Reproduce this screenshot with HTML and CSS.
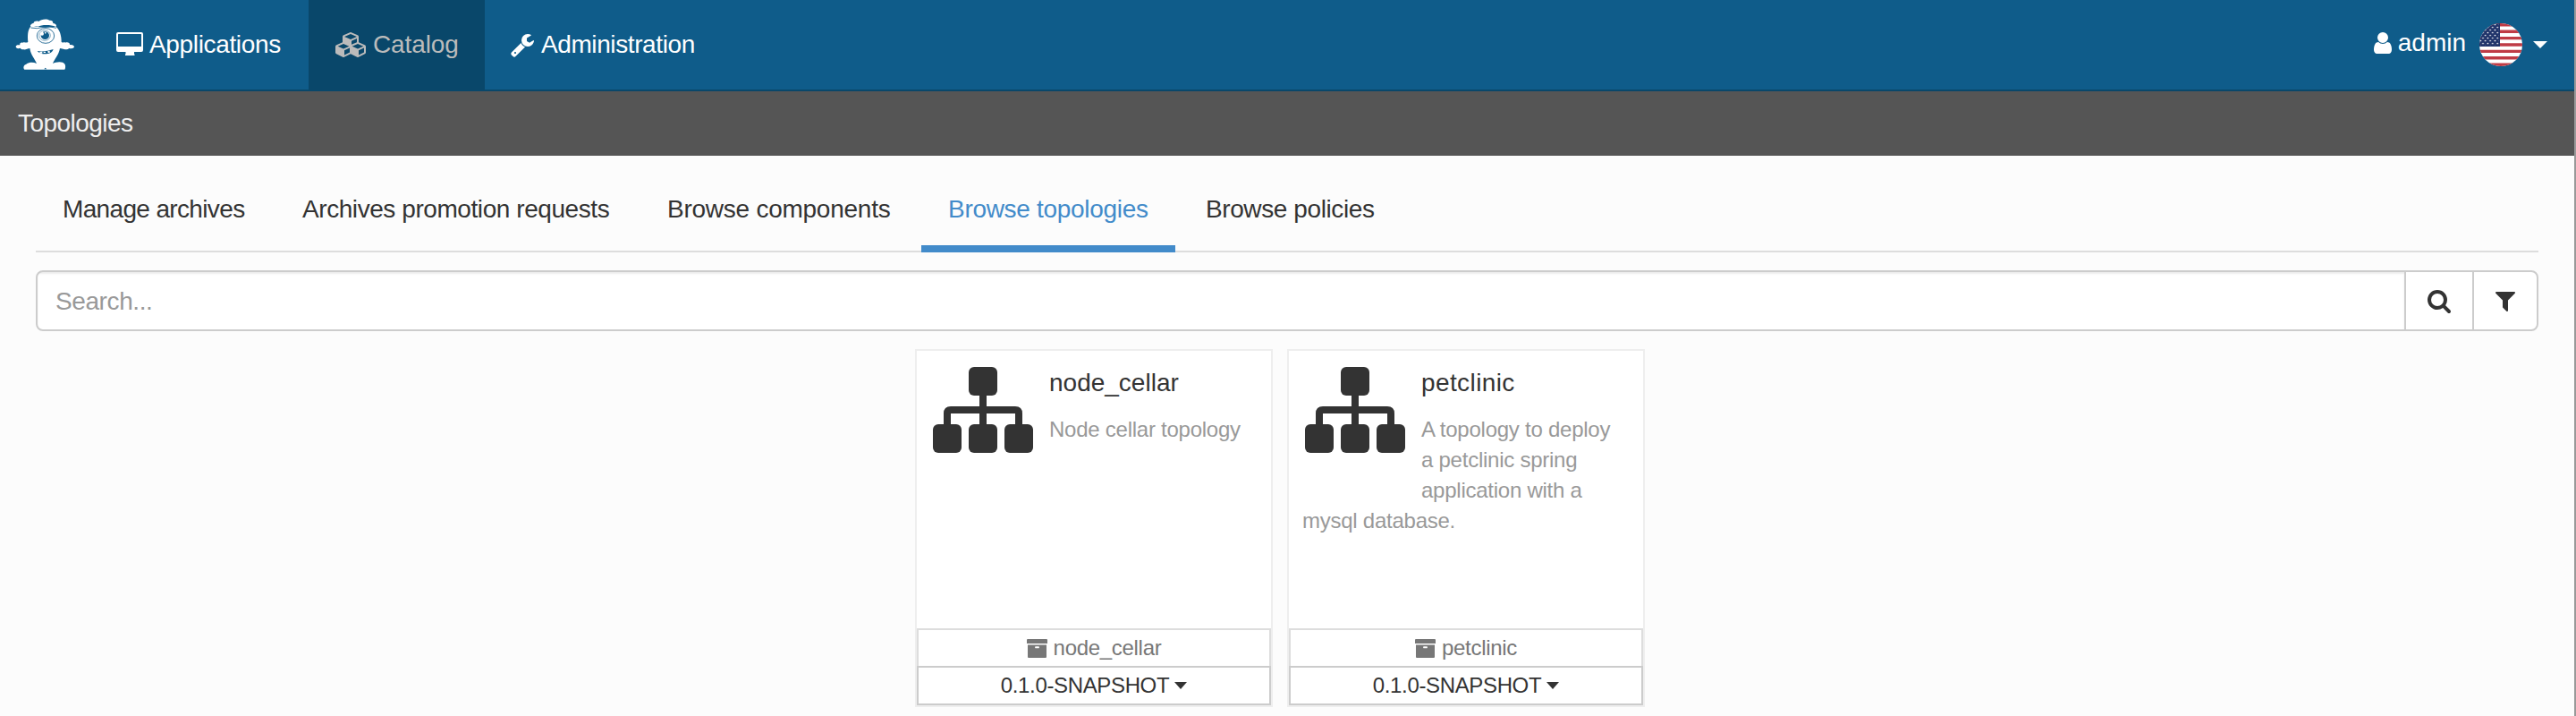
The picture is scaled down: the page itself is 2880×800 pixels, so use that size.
FILE: index.html
```html
<!DOCTYPE html>
<html lang="en">
<head>
<meta charset="utf-8">
<title>Topologies</title>
<link rel="stylesheet" href="styles.css">
</head>
<body>
<div class="page">
  <header class="navbar">
    <a class="brand">
      <svg class="logo" viewBox="0 0 198 174">
        <g fill="#fff">
          <path d="M51 27 Q60 24 100 29 L137 27 C149 37 155 55 155 78 C163 82 165 77 168 80 C176 77 184 81 183 87 C192 86 198 89 198 94 C197 99 190 101 181 99 C177 103 170 104 164 102 C160 101 157 100 150 99 C146 122 131 136 126 150 C136 145 160 141 167 153 C169 158 169 166 166 170 L31 170 C26 164 28 155 37 152 C47 145 61 145 72 150 C67 136 52 122 49 99 C42 100 35 104 28 103 C20 103 18 99 17 98 C10 101 2 99 2 93 C3 87 9 87 16 88 C14 82 19 78 26 80 C31 76 35 82 43 78 C41 56 42 38 51 27 Z"/>
          <path d="M52 26 C48 22 54 16 62 14 C62 8 72 6 79 9 C86 1 107 -1 115 5 C125 4 129 12 126 15 C138 16 140 23 136 27 C120 19 87 20 77 26 C68 23 62 30 52 26 Z"/>
        </g>
        <path d="M52 30 Q72 35 96 28 Q116 24 138 31" fill="none" stroke="#0f5c8a" stroke-width="2.500"/>
        <ellipse cx="102" cy="57" rx="29" ry="25" fill="#fff" stroke="#0f5c8a" stroke-width="2.500"/>
        <ellipse cx="99" cy="56" rx="19" ry="17" fill="none" stroke="#0f5c8a" stroke-width="1.500"/>
        <ellipse cx="100" cy="56" rx="14" ry="13" fill="#0f5c8a"/>
        <circle cx="90" cy="50" r="6" fill="#fff"/>
        <circle cx="101" cy="47" r="2.500" fill="#fff"/>
        <path d="M74 108 Q101 112 128 102 Q124 117 104 118 Q84 119 74 108 Z" fill="#0f5c8a"/>
        <path d="M82 110 h9 v6 h-9 z M95 110 h7 v4 h-7 z M109 108 l7 -1 v7 h-6 z" fill="#fff"/>
        <path d="M97 169 L101 164 L106 169 Z" fill="#0f5c8a"/>
      </svg>
    </a>
    <nav class="menu">
      <a class="menu-item apps">
        <svg class="icon-desktop" viewBox="0 0 30 26"><path fill="#fff" fill-rule="evenodd" d="M2 0H28Q30 0 30 2V20Q30 22 28 22H20V24.500H20.500V26H10V24.500H10.500V22H2Q0 22 0 20V2Q0 0 2 0ZM2 2.500V15.500Q2 16 2.500 16H27.500Q28 16 28 15.500V2.500Q28 2 27.500 2H2.500Q2 2 2 2.500Z"/></svg>
        <span>Applications</span>
      </a>
      <a class="menu-item catalog active">
        <svg class="icon-cubes" viewBox="0 0 2176 1792"><path fill="#bbb" d="M640 1632l384-192v-314l-384 164v342zm-64-454l404-173-404-173-404 173zm1088 454l384-192v-314l-384 164v342zm-64-454l404-173-404-173-404 173zm-448-293l384-165v-266l-384 164v267zm-64-379l441-189-441-189-441 189zm1088 518v416q0 36-19 67t-52 47l-448 224q-25 14-57 14t-57-14l-448-224q-4-2-7-4-2 2-7 4l-448 224q-25 14-57 14t-57-14l-448-224q-33-16-52-47t-19-67v-416q0-38 21.500-70t56.500-48l434-186v-400q0-38 21.500-70t56.500-48l448-192q23-10 50-10t50 10l448 192q35 16 56.500 48t21.500 70v400l434 186q36 16 57 48t21 70z"/></svg>
        <span>Catalog</span>
      </a>
      <a class="menu-item administration">
        <svg class="icon" viewBox="0 0 1792 1792"><path fill="#fff" d="M448 1472q0-26-19-45t-45-19-45 19-19 45 19 45 45 19 45-19 19-45zm644-420l-682 682q-37 37-90 37-52 0-91-37l-106-108q-38-36-38-90 0-53 38-91l681-681q39 98 114.500 173.500t173.500 114.500zm634-435q0 39-23 106-47 134-164.500 217.500t-258.500 83.500q-185 0-316.500-131.500t-131.500-316.500 131.500-316.500 316.500-131.500q58 0 121.500 16.500t107.500 46.500q16 11 16 28t-16 28l-293 169v224l193 107q5-3 79-48.500t135.500-81 70.500-35.500q15 0 23.500 10t8.500 25z"/></svg>
        <span>Administration</span>
      </a>
    </nav>
    <div class="account">
      <svg class="icon-user" viewBox="256 0 1280 1792"><path fill="#fff" d="M1536 1399q0 109-62.500 187t-150.500 78h-854q-88 0-150.500-78t-62.500-187q0-85 8.500-160.500t31.500-152 58.500-131 94-89 134.500-34.500q131 128 313 128t313-128q76 0 134.500 34.500t94 89 58.500 131 31.500 152 8.500 160.500zm-256-887q0 159-112.500 271.500t-271.500 112.500-271.500-112.500-112.500-271.500 112.500-271.500 271.500-112.500 271.500 112.500 112.500 271.500z"/></svg>
      <span class="user-name">admin</span>
      <svg class="flag" viewBox="0 0 48 48">
        <defs>
          <clipPath id="round"><circle cx="24" cy="24" r="24"/></clipPath>
          <pattern id="stars" width="5.400" height="6" patternUnits="userSpaceOnUse"><circle cx="1.300" cy="1.500" r=".85" fill="#fff"/><circle cx="4" cy="4.500" r=".85" fill="#fff"/></pattern>
        </defs>
        <g clip-path="url(#round)">
          <rect width="48" height="48" fill="#fff"/>
          <path stroke="#bf3b45" stroke-width="3.400" d="M0 1.800H48M0 9.200H48M0 16.600H48M0 24H48M0 31.400H48M0 38.800H48M0 46.200H48"/>
          <rect width="23" height="26" fill="#20346a"/>
          <rect width="22" height="25" fill="url(#stars)"/>
        </g>
      </svg>
      <svg class="caret-nav" viewBox="0 0 16 8"><path fill="#fff" d="M0 0H16L8 8Z"/></svg>
    </div>
  </header>
  <div class="context-bar">Topologies</div>
  <main class="content">
    <nav class="tabs">
      <a class="tab t1">Manage archives</a>
      <a class="tab t2">Archives promotion requests</a>
      <a class="tab t3">Browse components</a>
      <a class="tab t4 selected">Browse topologies</a>
      <a class="tab t5">Browse policies</a>
    </nav>
    <div class="search">
      <div class="search-input">Search...</div>
      <div class="search-button find"><svg class="icon" viewBox="0 0 1792 1792"><path fill="#333" d="M1216 832q0-185-131.500-316.500t-316.500-131.500-316.500 131.500-131.500 316.500 131.500 316.500 316.500 131.500 316.500-131.500 131.500-316.500zm512 832q0 52-38 90t-90 38q-54 0-90-38l-343-342q-179 124-399 124-143 0-273.500-55.500t-225-150-150-225-55.500-273.500 55.500-273.500 150-225 225-150 273.500-55.500 273.500 55.500 225 150 150 225 55.500 273.500q0 220-124 399l343 343q37 37 37 90z"/></svg></div>
      <div class="search-button filter"><svg class="icon" viewBox="0 0 1792 1792"><path fill="#333" d="M1595 295q17 41-14 70l-493 493v742q0 42-39 59-13 5-25 5-27 0-45-19l-256-256q-19-19-19-45v-486l-493-493q-31-29-14-70 17-39 59-39h1280q42 0 59 39z"/></svg></div>
    </div>
    <div class="cards">
      <article class="card">
        <div class="card-body">
          <svg class="sitemap" viewBox="0 0 112 96"><g fill="#333"><rect x="40" width="32" height="32" rx="6"/><rect y="64" width="32" height="32" rx="6"/><rect x="40" y="64" width="32" height="32" rx="6"/><rect x="80" y="64" width="32" height="32" rx="6"/><path d="M52 30H60V44H92Q100 44 100 52V66H92V52H60V66H52V52H20V66H12V52Q12 44 20 44H52Z"/></g></svg>
          <h3 class="title-node">node_cellar</h3>
          <p>Node cellar topology</p>
        </div>
        <div class="archive">
          <svg class="icon-archive" viewBox="0 0 23 21"><path fill="#777" fill-rule="evenodd" d="M1 0H22Q23 0 23 1V5H0V1Q0 0 1 0ZM1 6.500H22V20Q22 21 21 21H2Q1 21 1 20ZM9.500 8.300Q8.500 9.300 9.500 10.300H13.500Q14.500 9.300 13.500 8.300Z"/></svg>
          <span>node_cellar</span>
        </div>
        <div class="version"><span>0.1.0-SNAPSHOT</span><svg class="caret" viewBox="0 0 14 8"><path fill="#333" d="M0 0H14L7 8Z"/></svg></div>
      </article>
      <article class="card">
        <div class="card-body">
          <svg class="sitemap" viewBox="0 0 112 96"><g fill="#333"><rect x="40" width="32" height="32" rx="6"/><rect y="64" width="32" height="32" rx="6"/><rect x="40" y="64" width="32" height="32" rx="6"/><rect x="80" y="64" width="32" height="32" rx="6"/><path d="M52 30H60V44H92Q100 44 100 52V66H92V52H60V66H52V52H20V66H12V52Q12 44 20 44H52Z"/></g></svg>
          <h3 class="title-pet">petclinic</h3>
          <p>A topology to deploy a petclinic spring application with a mysql database.</p>
        </div>
        <div class="archive">
          <svg class="icon-archive" viewBox="0 0 23 21"><path fill="#777" fill-rule="evenodd" d="M1 0H22Q23 0 23 1V5H0V1Q0 0 1 0ZM1 6.500H22V20Q22 21 21 21H2Q1 21 1 20ZM9.500 8.300Q8.500 9.300 9.500 10.300H13.500Q14.500 9.300 13.500 8.300Z"/></svg>
          <span>petclinic</span>
        </div>
        <div class="version"><span>0.1.0-SNAPSHOT</span><svg class="caret" viewBox="0 0 14 8"><path fill="#333" d="M0 0H14L7 8Z"/></svg></div>
      </article>
    </div>
  </main>
</div>
</body>
</html>
```
FILE: styles.css
```css
* { box-sizing: border-box; }
body {
  margin: 0;
  background: #fcfcfc;
  color: #333;
  font: 28px/40px "Liberation Sans", Arial, sans-serif;
}
svg { display: block; flex: none; }
.page { height: 800px; border-right: 2px solid #999; overflow: hidden; }
.icon { width: 28px; height: 28px; }

.navbar {
  display: flex;
  height: 102px;
  background: #0f5c8a;
  border-bottom: 2px solid #09476a;
  color: #fff;
}
.brand { width: 100px; padding: 21px 0 0 17px; }
.logo { width: 66px; height: 58px; }
.menu { display: flex; }
.menu-item { display: flex; align-items: flex-start; padding-top: 34px; padding-left: 30px; }
.menu-item span { margin-top: -8px; line-height: 48px; }
.apps { width: 245px; }
.apps span { margin-left: 7px; letter-spacing: -0.35px; }
.icon-desktop { width: 30px; height: 26px; margin-top: 2px; }
.catalog { width: 197px; }
.catalog span { margin-left: 8px; letter-spacing: -0.1px; }
.icon-cubes { width: 34px; height: 28px; margin-top: 2px; }
.active { height: 102px; background: #09476a; color: #bbb; }
.administration { padding-left: 28px; }
.administration .icon { margin-top: 2px; }
.administration span { margin-left: 7px; letter-spacing: -0.4px; }
.account { display: flex; margin-left: auto; padding-right: 30px; }
.icon-user { width: 20px; height: 28px; margin-top: 34px; }
.user-name { margin: 28px 15px 0 7px; line-height: 40px; }
.flag { width: 48px; height: 48px; margin-top: 26px; }
.caret-nav { width: 16px; height: 8px; margin: 46px 0 0 12px; }

.context-bar {
  height: 72px;
  padding-left: 20px;
  background: #555;
  color: #eee;
  line-height: 72px;
  letter-spacing: -0.55px;
}

.content { padding: 26px 40px 0; }
.tabs { display: flex; gap: 4px; height: 82px; border-bottom: 2px solid #ddd; }
.tab { height: 82px; padding: 14px 30px 0; white-space: nowrap; }
.t1 { width: 264px; letter-spacing: -0.65px; }
.t2 { width: 404px; letter-spacing: -0.43px; }
.t3 { width: 310px; letter-spacing: -0.25px; }
.t4 { width: 284px; letter-spacing: -0.3px; }
.t5 { letter-spacing: -0.4px; }
.selected { border-bottom: 8px solid #428bca; color: #428bca; }

.search {
  display: flex;
  height: 68px;
  margin-top: 20px;
  border: 2px solid #ccc;
  border-radius: 8px;
  background: #fff;
  overflow: hidden;
}
.search-input {
  flex: 1;
  padding-left: 20px;
  box-shadow: inset 0 2px 2px rgba(0, 0, 0, .075);
  color: #999;
  line-height: 65px;
  letter-spacing: -0.4px;
}
.search-button { padding-top: 18px; border-left: 2px solid #ccc; }
.find { width: 76px; padding-left: 23px; }
.filter { width: 72px; padding-left: 21px; }

.cards { display: flex; justify-content: center; gap: 16px; margin-top: 20px; padding-right: 16px; }
.card {
  display: flex;
  flex-direction: column;
  width: 400px;
  height: 400px;
  border: 2px solid #eee;
  background: #fff;
}
.card-body { flex: 1; padding: 14px 24px 0 15px; }
.sitemap { float: left; width: 112px; height: 96px; margin: 4px 18px 50px 3px; }
h3 { margin: 0; font-size: 28px; font-weight: 400; line-height: 44px; }
.title-pet { letter-spacing: .4px; }
p { margin: 13px 0 0; color: #999; font-size: 24px; line-height: 34px; letter-spacing: -0.25px; }
.archive, .version {
  display: flex;
  align-items: center;
  justify-content: center;
  border: 2px solid #ddd;
  font-size: 24px;
}
.archive { height: 42px; border-bottom: 0; color: #777; letter-spacing: -0.3px; }
.icon-archive { width: 23px; height: 21px; margin-right: 7px; }
.version { height: 44px; border-color: #ccc; letter-spacing: -0.35px; }
.caret { width: 14px; height: 8px; margin-left: 6px; }
```
